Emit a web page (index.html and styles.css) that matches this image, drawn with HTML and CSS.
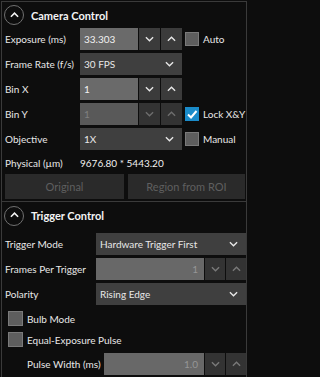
FILE: index.html
```html
<!DOCTYPE html>
<html>
<head>
<meta charset="utf-8">
<link rel="stylesheet" href="styles.css">
</head>
<body>
<div class="app">
  <section class="sec cam">
    <header class="hdr">
      <span class="circ"><svg viewBox="0 0 10 6" width="9" height="6"><polyline points="1,5 5,1 9,5"/></svg></span>
      <span class="title">Camera Control</span>
    </header>
    <div class="row">
      <span class="lbl">Exposure (ms)</span>
      <div class="spin w102">
        <span class="val">33.303</span>
        <span class="btn"><svg viewBox="0 0 10 6" width="9" height="6"><polyline points="1,1 5,5 9,1"/></svg></span>
        <span class="btn"><svg viewBox="0 0 10 6" width="9" height="6"><polyline points="1,5 5,1 9,5"/></svg></span>
      </div>
      <span class="chk"><span class="box"></span>Auto</span>
    </div>
    <div class="row">
      <span class="lbl">Frame Rate (f/s)</span>
      <div class="sel w102"><span>30 FPS</span><svg viewBox="0 0 10 6" width="9" height="6"><polyline points="1,1 5,5 9,1"/></svg></div>
    </div>
    <div class="row">
      <span class="lbl">Bin X</span>
      <div class="spin w102">
        <span class="val">1</span>
        <span class="btn"><svg viewBox="0 0 10 6" width="9" height="6"><polyline points="1,1 5,5 9,1"/></svg></span>
        <span class="btn"><svg viewBox="0 0 10 6" width="9" height="6"><polyline points="1,5 5,1 9,5"/></svg></span>
      </div>
    </div>
    <div class="row">
      <span class="lbl">Bin Y</span>
      <div class="spin w102 off">
        <span class="val">1</span>
        <span class="btn"><svg viewBox="0 0 10 6" width="9" height="6"><polyline points="1,1 5,5 9,1"/></svg></span>
        <span class="btn"><svg viewBox="0 0 10 6" width="9" height="6"><polyline points="1,5 5,1 9,5"/></svg></span>
      </div>
      <span class="chk"><span class="box on"><svg viewBox="0 0 14 14" width="14" height="14"><polyline points="3,7.5 6,10.5 11.5,4"/></svg></span>Lock X&amp;Y</span>
    </div>
    <div class="row">
      <span class="lbl">Objective</span>
      <div class="sel w102"><span>1X</span><svg viewBox="0 0 10 6" width="9" height="6"><polyline points="1,1 5,5 9,1"/></svg></div>
      <span class="chk"><span class="box"></span>Manual</span>
    </div>
    <div class="row phys">
      <span class="lbl">Physical (µm)</span>
      <span class="pval">9676.80 * 5443.20</span>
    </div>
    <div class="btns">
      <span class="pbtn">Original</span>
      <span class="pbtn">Region from ROI</span>
    </div>
  </section>
  <section class="sec trig">
    <header class="hdr">
      <span class="circ"><svg viewBox="0 0 10 6" width="9" height="6"><polyline points="1,5 5,1 9,5"/></svg></span>
      <span class="title">Trigger Control</span>
    </header>
    <div class="row">
      <span class="lbl l2">Trigger Mode</span>
      <div class="sel grow"><span>Hardware Trigger First</span><svg viewBox="0 0 10 6" width="9" height="6"><polyline points="1,1 5,5 9,1"/></svg></div>
    </div>
    <div class="row">
      <span class="lbl l2">Frames Per Trigger</span>
      <div class="spin grow off2">
        <span class="val r">1</span>
        <span class="btn"><svg viewBox="0 0 10 6" width="9" height="6"><polyline points="1,1 5,5 9,1"/></svg></span>
        <span class="btn"><svg viewBox="0 0 10 6" width="9" height="6"><polyline points="1,5 5,1 9,5"/></svg></span>
      </div>
    </div>
    <div class="row">
      <span class="lbl l2">Polarity</span>
      <div class="sel grow"><span>Rising Edge</span><svg viewBox="0 0 10 6" width="9" height="6"><polyline points="1,1 5,5 9,1"/></svg></div>
    </div>
    <div class="crow"><span class="box"></span>Bulb Mode</div>
    <div class="crow"><span class="box"></span>Equal-Exposure Pulse</div>
    <div class="row pw">
      <span class="lbl l3">Pulse Width (ms)</span>
      <div class="spin grow off2">
        <span class="val r">1.0</span>
        <span class="btn"><svg viewBox="0 0 10 6" width="9" height="6"><polyline points="1,1 5,5 9,1"/></svg></span>
        <span class="btn"><svg viewBox="0 0 10 6" width="9" height="6"><polyline points="1,5 5,1 9,5"/></svg></span>
      </div>
    </div>
  </section>
</div>
</body>
</html>
```

FILE: styles.css
```css
html, body {
  margin: 0;
  padding: 0;
  background: #0d0d0d;
  width: 250px;
  height: 377px;
  overflow: hidden;
}
body {
  font-family: Lato, "Liberation Sans", sans-serif;
  font-size: 10px;
  color: #e8e8e8;
}
.app {
  box-sizing: border-box;
  margin: 1px 0 0 1px;
  width: 246px;
  height: 376px;
  border: 1px solid #3a3a3a;
  border-bottom: none;
}
.sec {
  padding: 0 0 0 3px;
}
.cam {
  height: 199px;
  border-bottom: 1px solid #3a3a3a;
}
.hdr {
  height: 26px;
  display: flex;
  align-items: center;
}
.circ {
  box-sizing: border-box;
  width: 20px;
  height: 20px;
  margin-left: -1px;
  border: 1px solid #707070;
  border-radius: 50%;
  display: flex;
  align-items: center;
  justify-content: center;
}
.circ svg {
  fill: none;
  stroke: #f4f4f4;
  stroke-width: 1.7;
  margin-top: -1px;
}
.title {
  margin-left: 7px;
  font-weight: bold;
  font-size: 11px;
  color: #f4f4f4;
}
.row {
  display: flex;
  align-items: center;
  height: 22px;
  margin-bottom: 3px;
}
.lbl {
  width: 75px;
  flex: none;
  white-space: nowrap;
}
.l2 { width: 91px; }
.l3 { width: 77px; margin-left: 22px; }
.w102 { width: 102px; flex: none; }
.grow { flex: 1; }
.spin {
  display: flex;
  height: 22px;
  gap: 1px;
}
.val {
  flex: 1;
  background: #6a6a6a;
  color: #f2f2f2;
  display: flex;
  align-items: center;
  padding-left: 4px;
}
.val.r {
  justify-content: flex-end;
  padding: 0 6px 0 0;
}
.btn {
  width: 21px;
  flex: none;
  background: #3b3b3b;
  display: flex;
  align-items: center;
  justify-content: center;
}
.grow .btn { width: 20px; }
.btn svg, .sel svg {
  fill: none;
  stroke: #e8e8e8;
  stroke-width: 1.5;
}
.off .val { background: #595959; color: #808080; }
.off .btn { background: #333333; }
.off .btn svg { stroke: #6e6e6e; }
.off2 .val { background: #686868; color: #969696; }
.off2 .btn { background: #333333; }
.off2 .btn svg { stroke: #7a7a7a; }
.sel {
  height: 22px;
  box-sizing: border-box;
  background: #3f3f3f;
  display: flex;
  align-items: center;
  justify-content: space-between;
  padding: 0 8px 0 4px;
}
.chk {
  display: flex;
  align-items: center;
  margin-left: 3px;
  white-space: nowrap;
}
.box {
  box-sizing: border-box;
  width: 14px;
  height: 14px;
  background: #5e5e5e;
  border: 1px solid #7a7a7a;
  margin-right: 4px;
  flex: none;
}
.box.on {
  background: #1a8bc9;
  border-color: #1a8bc9;
  display: flex;
}
.box.on svg {
  fill: none;
  stroke: #ffffff;
  stroke-width: 2;
  margin: -1px;
}
.phys {
  height: 19px;
  margin: 0 0 2px 0;
}
.pval { color: #f0f0f0; }
.btns {
  display: grid;
  grid-template-columns: 119px 117px;
  gap: 4px;
  height: 25px;
}
.pbtn {
  background: #2a2a2a;
  color: #5f5f5f;
  font-size: 11px;
  display: flex;
  align-items: center;
  justify-content: center;
}
.trig .hdr { height: 27px; }
.trig .hdr + .row { margin-top: 4px; }
.crow {
  display: flex;
  align-items: center;
  height: 21px;
  padding-left: 3px;
}
.crow .box { width: 15px; height: 15px; }
.trig .row + .crow { margin-top: 3px; }
.pw { margin-top: 3px; }
```
